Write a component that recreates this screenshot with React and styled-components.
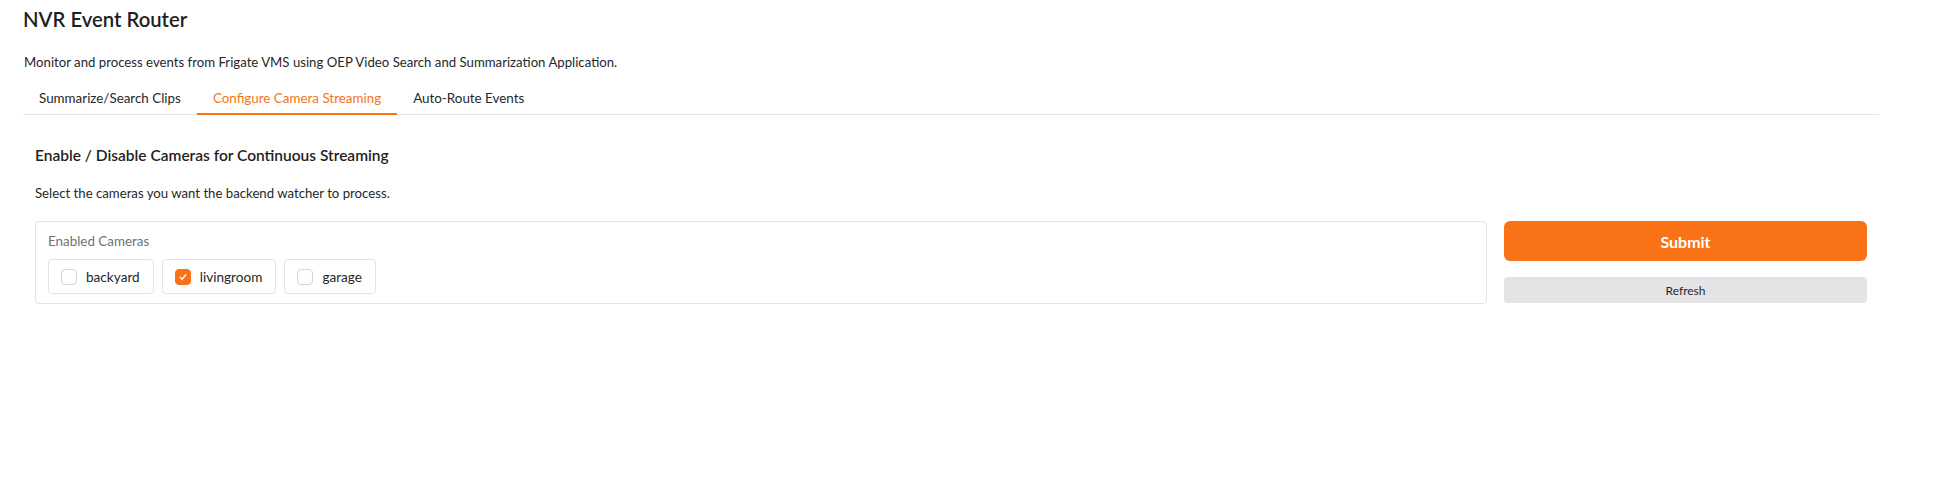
import React, { useState } from 'react';
import styled, { createGlobalStyle } from 'styled-components';

const GlobalStyle = createGlobalStyle`
  body {
    margin: 0;
    background: #fff;
    font-family: Lato, "Liberation Sans", sans-serif;
    color: #27272a;
  }
`;

const orange = '#f97316';

const tabs = ['Summarize/Search Clips', 'Configure Camera Streaming', 'Auto-Route Events'];
const cameras = [
  { name: 'backyard', enabled: false },
  { name: 'livingroom', enabled: true },
  { name: 'garage', enabled: false },
];

function CheckIcon() {
  return (
    <svg width="10" height="10" viewBox="0 0 16 16" fill="none">
      <path d="M3.5 8.5l3 3 6-7" stroke="#fff" strokeWidth="2.2" strokeLinecap="round" strokeLinejoin="round" />
    </svg>
  );
}

export default function App() {
  const [active, setActive] = useState(1);
  const [cams, setCams] = useState(cameras);

  const toggle = (i) =>
    setCams(cams.map((c, j) => (j === i ? { ...c, enabled: !c.enabled } : c)));

  return (
    <Page>
      <GlobalStyle />
      <Title>NVR Event Router</Title>
      <Description>
        Monitor and process events from Frigate VMS using OEP Video Search and Summarization Application.
      </Description>
      <TabBar>
        {tabs.map((t, i) => (
          <Tab key={t} $active={i === active} onClick={() => setActive(i)}>
            {t}
          </Tab>
        ))}
      </TabBar>
      <Panel>
        <Heading>Enable / Disable Cameras for Continuous Streaming</Heading>
        <Hint>Select the cameras you want the backend watcher to process.</Hint>
        <Row>
          <GroupBox>
            <GroupLabel>Enabled Cameras</GroupLabel>
            <Options>
              {cams.map((c, i) => (
                <Option key={c.name} onClick={() => toggle(i)}>
                  <Box $checked={c.enabled}>{c.enabled && <CheckIcon />}</Box>
                  {c.name}
                </Option>
              ))}
            </Options>
          </GroupBox>
          <Actions>
            <PrimaryButton>Submit</PrimaryButton>
            <SecondaryButton>Refresh</SecondaryButton>
          </Actions>
        </Row>
      </Panel>
    </Page>
  );
}

const Page = styled.div`
  width: 1856px;
  padding: 0 0 0 23px;
`;

const Title = styled.h1`
  margin: 0;
  padding-top: 7px;
  font-size: 20.3px;
  line-height: 24px;
  font-weight: 600;
  color: #1f1f23;
`;

const Description = styled.p`
  margin: 21px 0 0 1px;
  font-size: 13.2px;
  line-height: 20px;
  color: #27272a;
`;

const TabBar = styled.div`
  display: flex;
  margin-top: 10px;
  border-bottom: 1px solid #e4e4e7;
`;

const Tab = styled.button`
  background: none;
  border: none;
  font: inherit;
  font-size: 13.4px;
  line-height: 20px;
  padding: 6px 16px 5px;
  cursor: pointer;
  color: ${(p) => (p.$active ? orange : '#27272a')};
  border-bottom: 2px solid ${(p) => (p.$active ? orange : 'transparent')};
  margin-bottom: -1px;
`;

const Panel = styled.div`
  padding: 0 12px;
`;

const Heading = styled.h3`
  margin: 29px 0 0;
  font-size: 15.5px;
  line-height: 22px;
  font-weight: 600;
  color: #1f1f23;
`;

const Hint = styled.p`
  margin: 16.5px 0 0;
  font-size: 13.2px;
  line-height: 20px;
`;

const Row = styled.div`
  display: flex;
  gap: 17px;
  margin-top: 18.5px;
  align-items: flex-start;
`;

const GroupBox = styled.div`
  flex: 1;
  border: 1px solid #e4e4e7;
  border-radius: 4px;
  padding: 9px 12px 9px;
  height: 83px;
  box-sizing: border-box;
`;

const GroupLabel = styled.div`
  font-size: 13.4px;
  line-height: 20px;
  color: #71717a;
`;

const Options = styled.div`
  display: flex;
  gap: 8px;
  margin-top: 8px;
`;

const Option = styled.label`
  display: flex;
  align-items: center;
  gap: 9px;
  height: 35px;
  box-sizing: border-box;
  padding: 0 13px 0 12px;
  border: 1px solid #e4e4e7;
  border-radius: 4px;
  font-size: 13.6px;
  color: #27272a;
  cursor: pointer;
`;

const Box = styled.span`
  width: 16px;
  height: 16px;
  box-sizing: border-box;
  border-radius: 4px;
  display: flex;
  align-items: center;
  justify-content: center;
  background: ${(p) => (p.$checked ? orange : '#fff')};
  border: 1px solid ${(p) => (p.$checked ? orange : '#d4d4d8')};
`;

const Actions = styled.div`
  width: 363px;
  display: flex;
  flex-direction: column;
  gap: 16px;
`;

const PrimaryButton = styled.button`
  height: 40px;
  border: none;
  border-radius: 6px;
  background: ${orange};
  color: #fff;
  font: inherit;
  font-size: 16px;
  font-weight: 700;
  cursor: pointer;
`;

const SecondaryButton = styled.button`
  height: 26px;
  border: none;
  border-radius: 4px;
  background: #e4e4e7;
  color: #27272a;
  font: inherit;
  font-size: 12px;
  cursor: pointer;
`;
